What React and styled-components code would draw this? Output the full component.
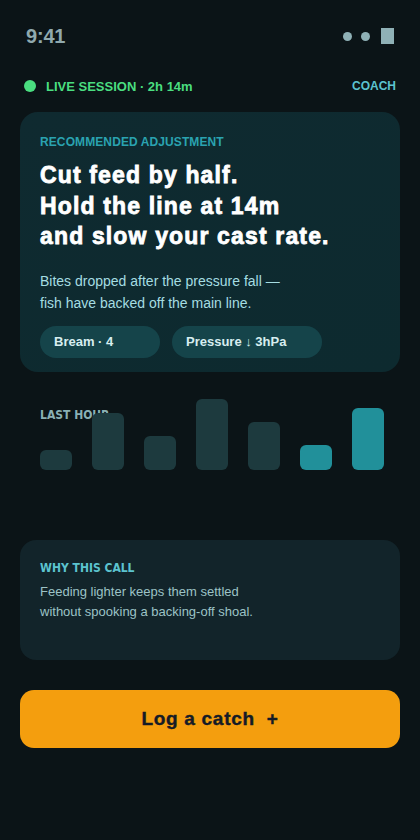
import styled, { createGlobalStyle } from 'styled-components'

const GlobalStyle = createGlobalStyle`
  html, body {
    margin: 0;
    padding: 0;
    background: #0b1417;
  }
  body {
    font-family: "Liberation Sans", Arial, sans-serif;
    -webkit-font-smoothing: antialiased;
  }
`

const bars = [
  { h: 20, hot: false },
  { h: 57, hot: false },
  { h: 34, hot: false },
  { h: 71, hot: false },
  { h: 48, hot: false },
  { h: 25, hot: true },
  { h: 62, hot: true },
]

function App() {
  return (
    <>
      <GlobalStyle />
      <Screen>
        <StatusBar>
          <Clock>9:41</Clock>
          <StatusIcons>
            <Dot />
            <Dot />
            <Battery />
          </StatusIcons>
        </StatusBar>

        <SessionRow>
          <Live>
            <LiveDot />
            LIVE SESSION · 2h 14m
          </Live>
          <Coach>COACH</Coach>
        </SessionRow>

        <AdviceCard>
          <Eyebrow>RECOMMENDED ADJUSTMENT</Eyebrow>
          <Headline>
            Cut feed by half.
            <br />
            Hold the line at 14m
            <br />
            and slow your cast rate.
          </Headline>
          <Reason>
            Bites dropped after the pressure fall —
            <br />
            fish have backed off the main line.
          </Reason>
          <Pills>
            <Pill $w={120}>Bream · 4</Pill>
            <Pill $w={150}>Pressure ↓ 3hPa</Pill>
          </Pills>
        </AdviceCard>

        <Chart>
          <ChartLabel>LAST HOUR</ChartLabel>
          <Bars>
            {bars.map((b, i) => (
              <Bar key={i} $hot={b.hot} style={{ height: b.h }} />
            ))}
          </Bars>
        </Chart>

        <WhyCard>
          <WhyTitle>WHY THIS CALL</WhyTitle>
          <WhyText>
            Feeding lighter keeps them settled
            <br />
            without spooking a backing-off shoal.
          </WhyText>
        </WhyCard>

        <CatchButton>
          Log a catch <Plus>+</Plus>
        </CatchButton>
      </Screen>
    </>
  )
}

export default App

const Screen = styled.div`
  width: 420px;
  min-height: 840px;
  box-sizing: border-box;
  padding: 0 20px;
  background: #0b1417;
  display: flex;
  flex-direction: column;
`

const StatusBar = styled.div`
  height: 72px;
  display: flex;
  align-items: center;
  justify-content: space-between;
  padding: 0 6px 0 6px;
`

const Clock = styled.span`
  font-size: 20px;
  font-weight: 700;
  color: #8fa9ae;
  letter-spacing: -0.2px;
`

const StatusIcons = styled.div`
  display: flex;
  align-items: center;
  gap: 9px;
`

const Dot = styled.span`
  width: 9px;
  height: 9px;
  border-radius: 50%;
  background: #8fb1b6;
`

const Battery = styled.span`
  width: 13px;
  height: 16px;
  background: #8fb1b6;
  margin-left: 2px;
`

const SessionRow = styled.div`
  height: 28px;
  display: flex;
  align-items: center;
  justify-content: space-between;
  padding: 0 4px;
  margin-bottom: 12px;
`

const Live = styled.span`
  display: flex;
  align-items: center;
  gap: 10px;
  font-size: 13px;
  font-weight: 700;
  color: #4ade80;
`

const LiveDot = styled.span`
  width: 12px;
  height: 12px;
  border-radius: 50%;
  background: #4ade80;
`

const Coach = styled.span`
  font-size: 12px;
  font-weight: 700;
  color: #5cc3cf;
`

const AdviceCard = styled.section`
  background: linear-gradient(160deg, #0f2a30 0%, #0d2a2f 100%);
  border-radius: 18px;
  padding: 23px 20px 14px;
`

const Eyebrow = styled.div`
  font-size: 12px;
  font-weight: 700;
  color: #2aa3b0;
  letter-spacing: 0.1px;
`

const Headline = styled.h1`
  margin: 11px 0 0;
  font-size: 23px;
  line-height: 30.5px;
  font-weight: 900;
  color: #ffffff;
  -webkit-text-stroke: 0.8px #ffffff;
  letter-spacing: 1.15px;
`

const Reason = styled.p`
  margin: 18px 0 0;
  font-size: 14px;
  line-height: 22px;
  color: #a5dde2;
`

const Pills = styled.div`
  display: flex;
  gap: 12px;
  margin-top: 12px;
`

const Pill = styled.span`
  width: ${(p) => p.$w}px;
  box-sizing: border-box;
  height: 32px;
  border-radius: 16px;
  background: #15444a;
  color: #d7eef0;
  font-size: 13px;
  font-weight: 700;
  display: flex;
  align-items: center;
  padding: 0 14px;
`

const Chart = styled.section`
  position: relative;
  height: 98px;
  display: flex;
  align-items: flex-end;
`

const ChartLabel = styled.span`
  position: absolute;
  left: 20px;
  top: 36px;
  font-family: "DejaVu Sans Condensed", "DejaVu Sans", sans-serif;
  font-size: 12px;
  font-weight: 700;
  color: #8ab0b4;
`

const Bars = styled.div`
  position: relative;
  display: flex;
  align-items: flex-end;
  gap: 20px;
  padding: 0 20px;
`

const Bar = styled.span`
  width: 32px;
  border-radius: 6px;
  background: ${(p) => (p.$hot ? '#21909a' : '#1d3a3e')};
`

const WhyCard = styled.section`
  margin-top: 70px;
  height: 120px;
  box-sizing: border-box;
  background: #12242a;
  border-radius: 16px;
  padding: 21px 20px;
`

const WhyTitle = styled.div`
  font-family: "DejaVu Sans Condensed", "DejaVu Sans", sans-serif;
  font-size: 12px;
  font-weight: 700;
  color: #5cc3cf;
`

const WhyText = styled.p`
  margin: 7px 0 0;
  font-size: 13px;
  line-height: 20px;
  color: #9cc3c6;
`

const CatchButton = styled.button`
  margin-top: 30px;
  height: 58px;
  border: none;
  border-radius: 14px;
  background: #f49e0e;
  color: #141b26;
  font-family: "Liberation Sans", Arial, sans-serif;
  font-size: 19px;
  font-weight: 700;
  letter-spacing: 0.7px;
  -webkit-text-stroke: 0.4px #141b26;
  display: flex;
  align-items: center;
  justify-content: center;
  cursor: pointer;
`

const Plus = styled.span`
  margin-left: 12px;
`
